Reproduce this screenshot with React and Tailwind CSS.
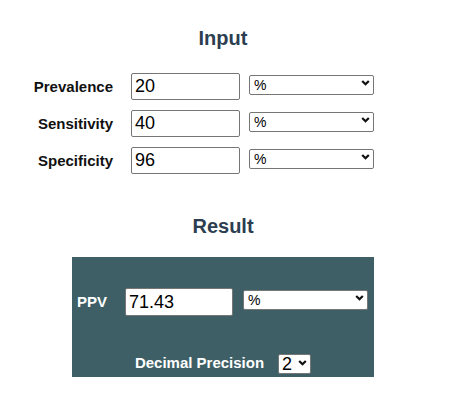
import React, { useState } from "react";

const Chevron = () => (
	<svg
		className="pointer-events-none absolute right-[4px] top-1/2 -translate-y-1/2"
		width="9"
		height="7"
		viewBox="0 0 9 7"
	>
		<path d="M1.2 1.5 L4.5 4.8 L7.8 1.5" fill="none" stroke="#111" strokeWidth="2.2" />
	</svg>
);

const UnitSelect = ({ className }) => (
	<div className={`relative ${className}`}>
		<select className="appearance-none w-full h-full bg-white border border-[#767676] rounded-[2px] pl-[4px] text-[14px] leading-none text-black outline-none">
			<option>%</option>
			<option>decimal</option>
		</select>
		<Chevron />
	</div>
);

const InputRow = ({ label, value, onChange }) => (
	<div className="flex items-start h-[27px] mb-[10px]">
		<label className="w-[93px] ml-[20px] text-right font-bold text-[15px] text-[#111] leading-[27px]">
			{label}
		</label>
		<input
			className="ml-[18px] w-[109px] h-[27px] border border-[#767676] rounded-[2px] px-[3px] text-[18px] text-black outline-none"
			value={value}
			onChange={onChange}
		/>
		<UnitSelect className="ml-[9px] w-[125px] h-[20px]" />
	</div>
);

const App = () => {
	const [form, setForm] = useState({ prevalence: "20", sensitivity: "40", specificity: "96" });

	const handleChange = (name) => (e) => setForm({ ...form, [name]: e.target.value });

	return (
		<div className="w-[446px] bg-white pt-[27px]" style={{ fontFamily: "Arial, 'Liberation Sans', sans-serif" }}>
			<h2 className="text-center text-[20px] leading-[23px] font-bold text-[#2c3e50] mb-[23px]">Input</h2>

			<InputRow label="Prevalence" value={form.prevalence} onChange={handleChange("prevalence")} />
			<InputRow label="Sensitivity" value={form.sensitivity} onChange={handleChange("sensitivity")} />
			<InputRow label="Specificity" value={form.specificity} onChange={handleChange("specificity")} />

			<h2 className="text-center text-[20px] leading-[23px] font-bold text-[#2c3e50] mt-[41px] mb-[19px]">Result</h2>

			<div className="ml-[72px] w-[302px] h-[120px] bg-[#3e5f66] pt-[31px]">
				<div className="flex items-start pl-[5px]">
					<span className="w-[30px] font-bold text-[15px] text-white leading-[28px]">PPV</span>
					<input
						className="ml-[18px] w-[108px] h-[28px] bg-white border border-[#767676] rounded-[2px] px-[3px] text-[18px] text-black outline-none"
						value="71.43"
						readOnly
					/>
					<UnitSelect className="ml-[10px] w-[125px] h-[20px]" />
				</div>
				<div className="flex items-center justify-center mt-[36px]">
					<span className="font-bold text-[15px] text-white">Decimal Precision</span>
					<div className="relative ml-[14px] w-[33px] h-[20px]">
						<select className="appearance-none w-full h-full bg-white border border-[#767676] rounded-[2px] pl-[3px] text-[18px] leading-none text-black outline-none">
							<option>2</option>
							<option>3</option>
						</select>
						<Chevron />
					</div>
				</div>
			</div>
		</div>
	);
};

export default App;
